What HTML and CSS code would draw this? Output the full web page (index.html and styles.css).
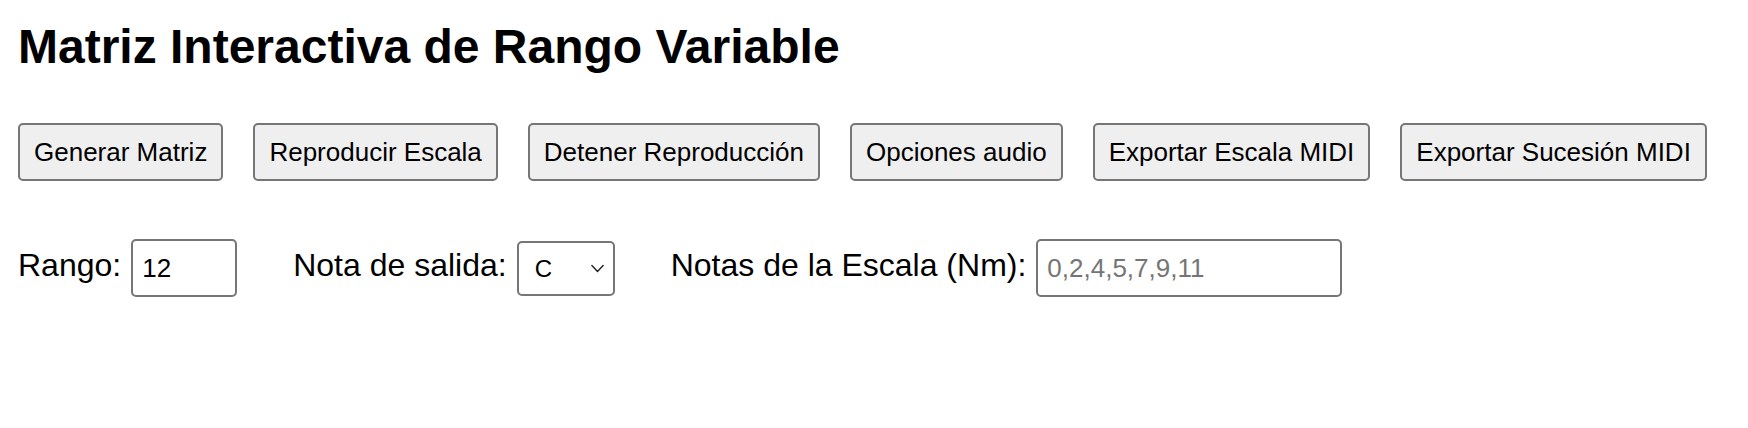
FILE: index.html
```html
<!DOCTYPE html>
<html lang="es">
<head>
<meta charset="utf-8">
<title>Matriz Interactiva de Rango Variable</title>
<link rel="stylesheet" href="styles.css">
</head>
<body>
<div class="page">
  <h1 class="title">Matriz Interactiva de Rango Variable</h1>
  <div class="toolbar">
    <button class="btn">Generar Matriz</button>
    <button class="btn">Reproducir Escala</button>
    <button class="btn">Detener Reproducción</button>
    <button class="btn">Opciones audio</button>
    <button class="btn">Exportar Escala MIDI</button>
    <button class="btn">Exportar Sucesión MIDI</button>
  </div>
  <div class="controls">
    <div class="field">
      <label class="label" for="rango">Rango:</label>
      <input class="input input-range" id="rango" type="text" value="12">
    </div>
    <div class="field">
      <label class="label" for="nota">Nota de salida:</label>
      <div class="select-wrap">
        <select class="select" id="nota">
          <option>C</option>
          <option>C#</option>
          <option>D</option>
          <option>D#</option>
          <option>E</option>
          <option>F</option>
          <option>F#</option>
          <option>G</option>
          <option>G#</option>
          <option>A</option>
          <option>A#</option>
          <option>B</option>
        </select>
        <svg class="chevron" width="13" height="9" viewBox="0 0 13 9" aria-hidden="true">
          <path d="M0.9 1.4 L6.5 7.4 L12.1 1.4" fill="none" stroke="#222" stroke-width="1.4" stroke-linecap="round" stroke-linejoin="round"/>
        </svg>
      </div>
    </div>
    <div class="field">
      <label class="label" for="escala">Notas de la Escala (Nm):</label>
      <input class="input input-scale" id="escala" type="text" placeholder="0,2,4,5,7,9,11">
    </div>
  </div>
</div>
</body>
</html>
```

FILE: styles.css
```css
html, body {
  margin: 0;
  padding: 0;
  background: #ffffff;
}

body {
  font-family: "Liberation Sans", Arial, Helvetica, sans-serif;
  color: #000000;
}

.page {
  padding: 19px 18px 0 18px;
}

.title {
  margin: 0 0 49px 0;
  font-size: 48px;
  font-weight: bold;
  line-height: normal;
}

.toolbar {
  display: flex;
  gap: 30px;
  margin-bottom: 58px;
}

.btn {
  box-sizing: border-box;
  height: 58px;
  padding: 0 14px;
  font-family: "Liberation Sans", Arial, Helvetica, sans-serif;
  font-size: 26px;
  color: #000000;
  background: #efefef;
  border: 2px solid #767676;
  border-radius: 5px;
  white-space: nowrap;
}

.controls {
  display: flex;
  align-items: center;
  gap: 56px;
}

.field {
  display: flex;
  align-items: center;
  gap: 10px;
}

.label {
  font-size: 32px;
  line-height: normal;
  margin-bottom: 5px;
  white-space: nowrap;
}

.input {
  box-sizing: border-box;
  height: 58px;
  padding: 0 9px;
  font-family: "Liberation Sans", Arial, Helvetica, sans-serif;
  font-size: 26px;
  color: #000000;
  background: #ffffff;
  border: 2px solid #767676;
  border-radius: 5px;
  outline: none;
}

.input::placeholder {
  color: #757575;
}

.input-range {
  width: 106px;
}

.input-scale {
  width: 306px;
}

.select-wrap {
  position: relative;
  display: flex;
}

.select {
  box-sizing: border-box;
  width: 98px;
  height: 55px;
  padding: 0 0 0 16px;
  font-family: "Liberation Sans", Arial, Helvetica, sans-serif;
  font-size: 24px;
  color: #000000;
  background: #ffffff;
  border: 2px solid #767676;
  border-radius: 5px;
  -webkit-appearance: none;
  appearance: none;
  outline: none;
}

.chevron {
  position: absolute;
  right: 11px;
  top: 23px;
  pointer-events: none;
}
```
